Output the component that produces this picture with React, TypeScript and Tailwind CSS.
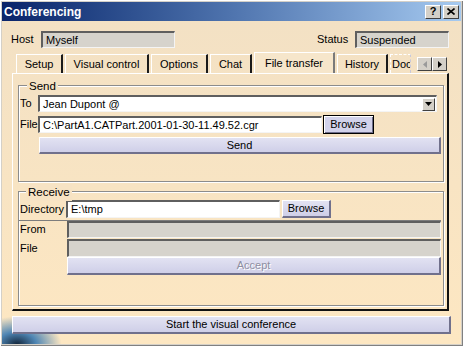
import React from "react";

const font = { fontFamily: '"Liberation Sans", Arial, sans-serif' };

// sunken text field (white or disabled grey)
function Field({ w, h = 17, text, disabled }: { w: string; h?: number; text?: string; disabled?: boolean }) {
  return (
    <div
      className={`${w} flex items-center border-t-2 border-l-2 border-b border-r border-t-[#5f5f5f] border-l-[#5f5f5f] border-b-[#f4f4f4] border-r-[#f4f4f4] pl-[3px] text-[11px] text-black ${
        disabled ? "bg-[#d6d3cc]" : "bg-white"
      }`}
      style={{ height: h }}
    >
      {text}
    </div>
  );
}

function Tab({ w, label, active }: { w: string; label: string; active?: boolean }) {
  return (
    <div
      className={`${w} flex items-center justify-center border-l border-t border-r-2 border-l-white border-t-white border-r-[#1a1a1a] text-[11px] text-black ${
        active ? "h-[21px] bg-[#f6e6cb] border-r-[#7a7a7a] border-r" : "h-[19px]"
      }`}
    >
      {label}
    </div>
  );
}

export default function App() {
  return (
    <div className="w-[463px] h-[346px] bg-[#d4d0c8] p-[2px] flex flex-col shadow-[inset_1px_1px_0_#ffffff,inset_-1px_-1px_0_#808080]" style={font}>
      {/* title bar */}
      <div className="h-[19px] flex items-center justify-between bg-gradient-to-r from-[#0a246a] via-[#4f74ae] to-[#a6caf0] pl-[2px] pr-[2px]">
        <span className="text-white font-bold text-[12px]">Conferencing</span>
        <div className="flex gap-[2px]">
          <div className="w-[16px] h-[14px] bg-[#d4d0c8] border-t border-l border-t-white border-l-white border-b border-r border-b-[#404040] border-r-[#404040] flex items-center justify-center text-[11px] font-bold leading-none text-black">
            ?
          </div>
          <div className="w-[16px] h-[14px] bg-[#d4d0c8] border-t border-l border-t-white border-l-white border-b border-r border-b-[#404040] border-r-[#404040] flex items-center justify-center">
            <svg width="8" height="7" viewBox="0 0 8 7">
              <path d="M0.5 0.5 L7.5 6.5 M7.5 0.5 L0.5 6.5" stroke="black" strokeWidth="1.6" />
            </svg>
          </div>
        </div>
      </div>

      {/* body */}
      <div className="relative flex-1 flex flex-col bg-gradient-to-b from-[#f3e1c4] to-[#fde7c2] overflow-hidden">
        <div className="absolute left-0 bottom-0 w-[60px] h-[28px] bg-[radial-gradient(ellipse_at_25%_100%,#14283e_0%,#4f86b4_30%,rgba(253,231,194,0)_70%)]" />

        {/* host / status */}
        <div className="mt-[10px] pl-[9px] pr-[12px] flex items-center text-[11px] text-black">
          <span className="w-[30px]">Host</span>
          <Field w="w-[134px]" text="Myself" disabled />
          <div className="flex-1" />
          <span className="w-[38px]">Status</span>
          <Field w="w-[94px]" text="Suspended" disabled />
        </div>

        {/* tabs */}
        <div className="mt-[4px] pl-[14px] pr-[14px] flex items-end h-[21px] gap-[2px]">
          <Tab w="w-[47px]" label="Setup" />
          <Tab w="w-[84px]" label="Visual control" />
          <Tab w="w-[57px]" label="Options" />
          <Tab w="w-[42px]" label="Chat" />
          <Tab w="w-[81px]" label="File transfer" active />
          <Tab w="w-[51px]" label="History" />
          <div className="w-[21px] h-[19px] overflow-hidden border-l border-t border-l-white border-t-white border-r border-dashed border-r-[#c8c8d8] flex items-center pl-[1px] text-[11px]">
            Doc
          </div>
          <div className="flex-1" />
          <div className="flex mb-[2px]">
            <div className="w-[15px] h-[14px] bg-[#d4d0c8] border-t border-l border-t-white border-l-white border-b border-r border-b-[#404040] border-r-[#404040] flex items-center justify-center">
              <svg width="4" height="7" viewBox="0 0 4 7"><path d="M4 0 L0 3.5 L4 7 Z" fill="#9a9a9a" /></svg>
            </div>
            <div className="w-[15px] h-[14px] bg-[#d4d0c8] border-t border-l border-t-white border-l-white border-b border-r border-b-[#404040] border-r-[#404040] flex items-center justify-center">
              <svg width="4" height="7" viewBox="0 0 4 7"><path d="M0 0 L4 3.5 L0 7 Z" fill="black" /></svg>
            </div>
          </div>
        </div>

        {/* tab panel */}
        <div className="ml-[10px] mr-[12px] h-[238px] border-l border-t border-l-white border-t-white border-r-2 border-b-2 border-r-[#111] border-b-[#111] pl-[5px] pr-[3px] flex flex-col">
          {/* Send group */}
          <div className="relative mt-[11px] h-[97px] border border-[#8c8c8c] shadow-[inset_1px_1px_0_#ffffff,1px_1px_0_#ffffff] pt-[9px] text-[11px] text-black">
            <span className="absolute left-[8px] top-[-8px] px-[2px] bg-[#f4e2c4] text-[11.5px]">Send</span>
            <div className="flex items-center">
              <span className="w-[19px] pl-[1px]">To</span>
              <div className="w-[399px] h-[17px] flex items-center justify-between bg-white border-t-2 border-l-2 border-b border-r border-t-[#5f5f5f] border-l-[#5f5f5f] border-b-[#f4f4f4] border-r-[#f4f4f4] pl-[3px] pr-[1px]">
                <span>Jean Dupont @</span>
                <div className="w-[13px] h-[13px] bg-[#d4d0c8] border-t border-l border-t-white border-l-white border-b border-r border-b-[#404040] border-r-[#404040] flex items-center justify-center">
                  <svg width="7" height="4" viewBox="0 0 7 4"><path d="M0 0 L7 0 L3.5 4 Z" fill="black" /></svg>
                </div>
              </div>
            </div>
            <div className="flex items-center mt-[3px]">
              <span className="w-[19px] pl-[1px]">File</span>
              <Field w="w-[284px]" text="C:\PartA1.CATPart.2001-01-30-11.49.52.cgr" />
              <div className="ml-[1px] w-[51px] h-[19px] border border-black bg-[#d2d2ea] shadow-[inset_1px_1px_0_#ffffff,inset_-1px_-1px_0_#6c6c8a] flex items-center justify-center">
                Browse
              </div>
            </div>
            <div className="ml-[20px] mt-[3px] w-[402px] h-[17px] bg-gradient-to-b from-[#e2e2f2] to-[#cfcfe8] border-t border-l border-t-white border-l-white border-b-2 border-r-2 border-b-[#70708c] border-r-[#70708c] flex items-center justify-center">
              Send
            </div>
          </div>

          {/* Receive group */}
          <div className="relative mt-[9px] h-[115px] border border-[#8c8c8c] shadow-[inset_1px_1px_0_#ffffff,1px_1px_0_#ffffff] pt-[8px] text-[11px] text-black">
            <span className="absolute left-[7px] top-[-8px] px-[2px] bg-[#f7e3c4] text-[11.5px]">Receive</span>
            <div className="flex items-center">
              <span className="w-[47px] pl-[1px]">Directory</span>
              <Field w="w-[214px]" h={18} text="E:\tmp" />
              <div className="ml-[2px] w-[49px] h-[18px] bg-gradient-to-b from-[#e2e2f2] to-[#cfcfe8] border-t border-l border-t-white border-l-white border-b-2 border-r-2 border-b-[#70708c] border-r-[#70708c] flex items-center justify-center">
                Browse
              </div>
            </div>
            <div className="mt-[2px] mr-[2px] h-px bg-[#7d7d7d]" />
            <div className="flex items-center">
              <span className="w-[48px] pl-[1px]">From</span>
              <Field w="w-[374px]" disabled />
            </div>
            <div className="flex items-center mt-px">
              <span className="w-[48px] pl-[1px]">File</span>
              <Field w="w-[374px]" h={18} disabled />
            </div>
            <div className="ml-[48px] w-[374px] h-[18px] bg-gradient-to-b from-[#e2e2f2] to-[#cfcfe8] border-t border-l border-t-white border-l-white border-b-2 border-r-2 border-b-[#70708c] border-r-[#70708c] flex items-center justify-center text-[#8e8ea2] [text-shadow:1px_1px_0_#ffffff]">
              Accept
            </div>
          </div>
        </div>

        {/* start button */}
        <div className="relative mt-[5px] ml-[10px] mr-[10px] h-[18px] bg-gradient-to-b from-[#e2e2f2] to-[#cfcfe8] border-t border-l border-t-white border-l-white border-b-2 border-r-2 border-b-[#70708c] border-r-[#70708c] flex items-center justify-center text-[11px] text-black">
          Start the visual conference
        </div>
      </div>
    </div>
  );
}
